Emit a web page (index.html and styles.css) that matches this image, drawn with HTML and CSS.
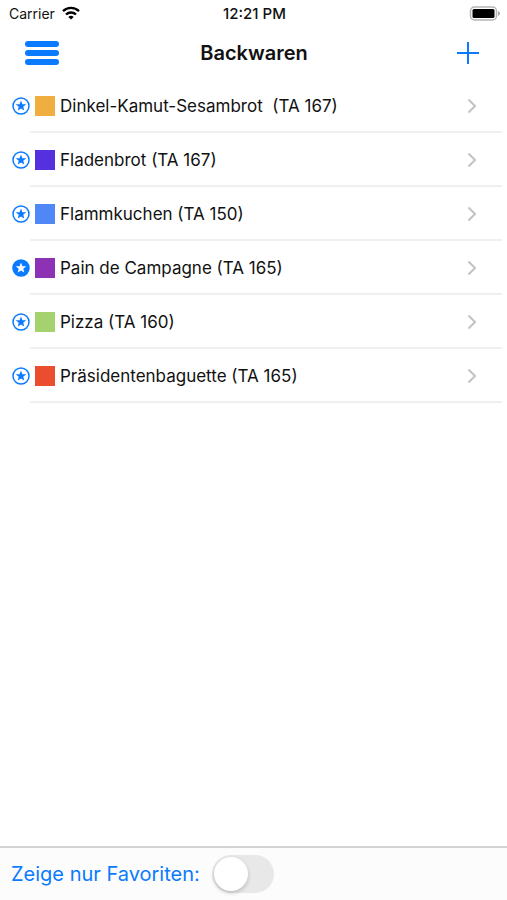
FILE: index.html
```html
<!DOCTYPE html>
<html lang="de">
<head>
<meta charset="utf-8">
<meta name="viewport" content="width=device-width, initial-scale=1">
<title>Backwaren</title>
<link rel="stylesheet" href="styles.css">
</head>
<body>
<svg class="sprite" aria-hidden="true">
  <symbol id="star" viewBox="0 0 18 18">
    <circle class="disc" cx="9" cy="9" r="8"/>
    <path class="star-shape" d="M9 3.500l1.400 3.650 3.900.2-3.050 2.450 1 3.800L9 11.500l-3.250 2.100 1-3.800L3.700 7.350l3.900-.2z"/>
  </symbol>
  <symbol id="chevron" viewBox="0 0 10 16">
    <path d="M1.500 1.500L8 8l-6.500 6.500" fill="none" stroke="#c2c2c5" stroke-width="2"/>
  </symbol>
</svg>
<div class="status">
  <div class="carrier">
    <span>Carrier</span>
    <svg class="wifi" viewBox="0 0 18 14" fill="none" stroke="#000" stroke-width="2.400">
      <path d="M1 5.200a11.400 11.400 0 0 1 16 0"/>
      <path d="M4 8.500a7.200 7.200 0 0 1 10 0"/>
      <path d="M9 13.600L6.300 11a3.900 3.900 0 0 1 5.400 0z" fill="#000" stroke="none"/>
    </svg>
  </div>
  <time class="clock">12:21 PM</time>
  <svg class="battery" viewBox="0 0 31 15">
    <rect x="1.500" y="1" width="26" height="13" rx="4" fill="#fff" stroke="#b5b5b5" stroke-width="1.500"/>
    <rect x="3.500" y="3" width="22" height="9" rx="1.500"/>
    <path d="M29 5v5c1.300-.4 2-1.300 2-2.500s-.7-2.100-2-2.500z" fill="#aaa"/>
  </svg>
</div>
<header class="navbar">
  <button class="menu" type="button" aria-label="Menü">
    <svg viewBox="0 0 34 24" fill="#0a7aff">
      <rect width="34" height="6" rx="3"/>
      <rect y="9" width="34" height="6" rx="3"/>
      <rect y="18" width="34" height="6" rx="3"/>
    </svg>
  </button>
  <h1>Backwaren</h1>
  <button class="add" type="button" aria-label="Hinzufügen">
    <svg viewBox="0 0 22 22"><path d="M11 0v22M0 11h22" stroke="#0a7aff" stroke-width="2"/></svg>
  </button>
</header>
<main>
  <ul class="list">
    <li class="row">
      <button class="favorite" type="button" aria-label="Favorit"><svg><use href="#star"/></svg></button>
      <a class="item" href="#"><span class="swatch orange"></span><span class="name">Dinkel-Kamut-Sesambrot  (TA 167)</span><svg class="chevron"><use href="#chevron"/></svg></a>
    </li>
    <li class="row">
      <button class="favorite" type="button" aria-label="Favorit"><svg><use href="#star"/></svg></button>
      <a class="item" href="#"><span class="swatch indigo"></span><span class="name">Fladenbrot (TA 167)</span><svg class="chevron"><use href="#chevron"/></svg></a>
    </li>
    <li class="row">
      <button class="favorite" type="button" aria-label="Favorit"><svg><use href="#star"/></svg></button>
      <a class="item" href="#"><span class="swatch blue"></span><span class="name">Flammkuchen (TA 150)</span><svg class="chevron"><use href="#chevron"/></svg></a>
    </li>
    <li class="row">
      <button class="favorite active" type="button" aria-label="Favorit" aria-pressed="true"><svg><use href="#star"/></svg></button>
      <a class="item" href="#"><span class="swatch purple"></span><span class="name">Pain de Campagne (TA 165)</span><svg class="chevron"><use href="#chevron"/></svg></a>
    </li>
    <li class="row">
      <button class="favorite" type="button" aria-label="Favorit"><svg><use href="#star"/></svg></button>
      <a class="item" href="#"><span class="swatch green"></span><span class="name">Pizza (TA 160)</span><svg class="chevron"><use href="#chevron"/></svg></a>
    </li>
    <li class="row">
      <button class="favorite" type="button" aria-label="Favorit"><svg><use href="#star"/></svg></button>
      <a class="item" href="#"><span class="swatch red"></span><span class="name">Präsidentenbaguette (TA 165)</span><svg class="chevron"><use href="#chevron"/></svg></a>
    </li>
  </ul>
</main>
<footer class="toolbar">
  <label for="only-favorites">Zeige nur Favoriten:</label>
  <input class="switch" id="only-favorites" type="checkbox" role="switch">
</footer>
</body>
</html>
```
FILE: styles.css
```css
* {
  box-sizing: border-box;
}

body {
  margin: 0;
  min-height: 100vh;
  display: flex;
  flex-direction: column;
  background: #fff;
  color: #111;
  font-family: Inter, "Liberation Sans", sans-serif;
  font-size: 17px;
}

button {
  padding: 0;
  border: 0;
  background: none;
  cursor: pointer;
}

svg {
  display: block;
}

.sprite {
  position: absolute;
  width: 0;
  height: 0;
}

.status,
.navbar {
  display: grid;
  grid-template-columns: 1fr auto 1fr;
  align-items: center;
}

.status {
  height: 26px;
  padding: 0 7px 0 9px;
  font-size: 14px;
}

.carrier {
  display: flex;
  align-items: center;
  gap: 7px;
}

.wifi {
  width: 18px;
  height: 14px;
}

.clock {
  font-size: 15px;
  font-weight: 500;
}

.battery {
  width: 31px;
  height: 15px;
  justify-self: end;
}

.navbar {
  height: 53px;
  padding: 0 28px 0 25px;
}

.menu {
  justify-self: start;
}

.menu svg {
  width: 34px;
  height: 24px;
}

.add {
  justify-self: end;
}

.add svg {
  width: 22px;
  height: 22px;
}

h1 {
  margin: 0;
  padding-left: 4px;
  font-size: 20px;
  font-weight: 600;
}

main {
  flex: 1;
}

.list {
  margin: 0;
  padding: 0;
  list-style: none;
}

.row {
  display: flex;
  height: 54px;
  padding: 0 5px 0 12px;
}

.favorite {
  width: 18px;
}

.favorite svg {
  width: 18px;
  height: 18px;
}

.disc {
  fill: var(--disc, #fff);
  stroke: #0a7aff;
  stroke-width: 1.5px;
}

.star-shape {
  fill: var(--star, #0a7aff);
}

.active {
  --disc: #0a7aff;
  --star: #fff;
}

.item {
  flex: 1;
  display: flex;
  align-items: center;
  gap: 5px;
  padding: 2px 25px 0 5px;
  border-bottom: 2px solid #f0f0f0;
  color: inherit;
  text-decoration: none;
}

.swatch {
  width: 20px;
  height: 20px;
}

.orange { background: #f0ae40; }
.indigo { background: #5430df; }
.blue { background: #4f87f7; }
.purple { background: #8d31b5; }
.green { background: #a3d26e; }
.red { background: #ea4e2e; }

.name {
  flex: 1;
  white-space: pre;
}

.chevron {
  width: 10px;
  height: 16px;
}

.toolbar {
  display: flex;
  align-items: center;
  gap: 12px;
  height: 54px;
  padding: 0 11px;
  border-top: 2px solid #d2d2d2;
  background: #fcfcfc;
  color: #0a7aff;
  font-size: 20px;
}

.switch {
  appearance: none;
  display: flex;
  width: 62px;
  height: 38px;
  margin: 0;
  padding: 2px;
  border-radius: 19px;
  background: #e8e8e9;
}

.switch::before {
  content: "";
  width: 34px;
  height: 34px;
  border-radius: 50%;
  background: #fff;
  box-shadow: 0 2px 4px rgba(0, 0, 0, 0.2);
}

.switch:checked {
  justify-content: flex-end;
  background: #34c759;
}
```
